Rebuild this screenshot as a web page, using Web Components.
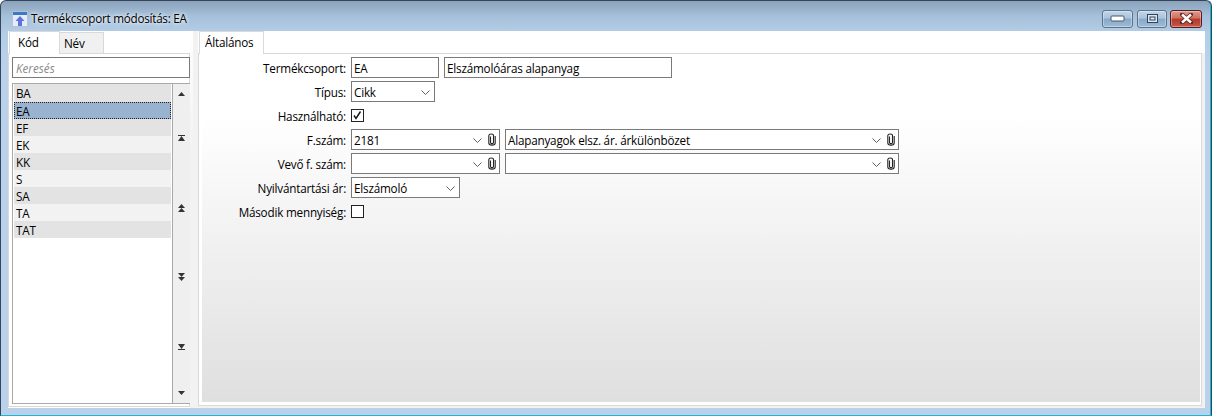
<!doctype html>
<html>
<head>
<meta charset="utf-8">
<style>
html, body { margin: 0; height: 100%; }
body { font: 11.7px "Open Sans", "Noto Sans", sans-serif; letter-spacing: -0.2px; color: #000; width: 1212px; height: 416px; overflow: hidden; }
</style>
</head>
<body>
<x-window title="Termékcsoport módosítás: EA">
  <x-side-panel>
    <x-code-list selected="EA" items="BA,EA,EF,EK,KK,S,SA,TA,TAT"></x-code-list>
  </x-side-panel>
  <x-form-panel tab="Általános">
    <x-row label="Termékcsoport:" top="1"><x-box w="88">EA</x-box><x-box w="228">Elszámolóáras alapanyag</x-box></x-row>
    <x-row label="Típus:" top="3"><x-box w="84" combo>Cikk</x-box></x-row>
    <x-row label="Használható:" top="7" h="13"><x-check checked></x-check></x-row>
    <x-row label="F.szám:" top="7"><x-box w="149" combo clip>2181</x-box><x-box w="394" combo clip>Alapanyagok elsz. ár. árkülönbözet</x-box></x-row>
    <x-row label="Vevő f. szám:" top="3"><x-box w="149" combo clip></x-box><x-box w="394" combo clip></x-box></x-row>
    <x-row label="Nyilvántartási ár:" top="3"><x-box w="109" combo>Elszámoló</x-box></x-row>
    <x-row label="Második mennyiség:" top="7" h="13"><x-check></x-check></x-row>
  </x-form-panel>
</x-window>
<script>
class XWindow extends HTMLElement {
  connectedCallback() {
    const shadow = this.attachShadow({ mode: "open" });
    shadow.innerHTML = `
    <style>
    :host {
      display: grid;
      grid-template-rows: 30px 1fr;
      width: 1212px;
      height: 416px;
      box-sizing: border-box;
      padding: 0 8px 7px;
      border: 1px solid #33465a;
      border-bottom-color: #18b8d0;
      border-radius: 6px 6px 0 0;
      box-shadow: inset -1px 0 0 #18b8d0;
      background: linear-gradient(#8ba2ba 0, #a5c0da 15px, #b4cde6 31px, #b9d1ea 60px);
    }
    header {
      display: flex;
      align-items: center;
      box-sizing: border-box;
      margin: 0 -7px;
      padding: 4px 8px 0 10px;
      height: 30px;
    }
    header svg.app { width: 16px; height: 16px; margin: 1px 3px 0 0; }
    h1 {
      margin: 0;
      flex: 1;
      font: 11.7px "Open Sans", sans-serif;
      letter-spacing: -0.25px;
      text-shadow: 0 0 6px #fff, 0 0 3px #fff;
    }
    .ctl {
      width: 31px;
      height: 18px;
      box-sizing: border-box;
      margin-left: 4px;
      margin-top: 1px;
      border: 1px solid #5b7389;
      border-radius: 3px;
      background: linear-gradient(#c2d5e8 0, #a9c3dc 45%, #86a8c8 50%, #9fbcd8 100%);
      display: flex;
      align-items: center;
      justify-content: center;
      box-shadow: inset 0 0 0 1px rgba(255,255,255,.35);
    }
    .ctl.max { width: 30px; }
    .ctl.close {
      width: 32px;
      margin-left: 3px;
      border-color: #5b1a1a;
      background: linear-gradient(#dd9a90 0, #d0705f 45%, #b23a2a 50%, #c4574a 100%);
    }
    main {
      display: grid;
      grid-template-columns: 182px 1fr;
      column-gap: 8px;
      padding-right: 3px;
      background:
        linear-gradient(#fff, #fff) right top / 3px 22px no-repeat,
        linear-gradient(#fff 0, #f2f2f2 120px) 182px 0 / 3px 100% no-repeat,
        #f2f2f2;
      min-height: 0;
      margin-left: -1px;
      margin-right: -2px;
    }
    </style>
    <header>
      <svg class="app" viewBox="0 0 16 16">
        <rect x=".5" y=".5" width="15" height="15" fill="#e6ebf8" stroke="#b4c2dc"/>
        <rect x="1" y="1" width="14" height="3" fill="#3c78c8"/>
        <path d="M8 5 L12.5 10 L10 10 L10 15 L6 15 L6 10 L3.5 10 Z" fill="#5a74d8"/>
      </svg>
      <h1></h1>
      <div class="ctl"><svg width="15" height="7" viewBox="0 0 15 7"><rect x="1" y="1" width="13" height="5" rx="1" fill="#fff" stroke="#45596e"/></svg></div>
      <div class="ctl max"><svg width="13" height="11" viewBox="0 0 13 11"><rect x="1.5" y="1.5" width="10" height="8" fill="#dfe8f2" stroke="#2f4358"/><rect x="4" y="4" width="5" height="3" fill="none" stroke="#2f4358"/></svg></div>
      <div class="ctl close"><svg width="15" height="11" viewBox="0 0 15 11"><path d="M3 1.5 L12 9.5 M12 1.5 L3 9.5" stroke="#5b2420" stroke-width="4" stroke-linecap="round"/><path d="M3 1.5 L12 9.5 M12 1.5 L3 9.5" stroke="#fff" stroke-width="2.4"/></svg></div>
    </header>
    <main><slot></slot></main>
    `;
    shadow.querySelector("h1").textContent = this.getAttribute("title");
    this.removeAttribute("title");
  }
}

class XSidePanel extends HTMLElement {
  connectedCallback() {
    const shadow = this.attachShadow({ mode: "open" });
    shadow.innerHTML = `
    <style>
    :host { display: flex; flex-direction: column; min-height: 0; background: #fff; padding-bottom: 1px; }
    nav { display: flex; height: 23px; padding-left: 1px; margin-bottom: -1px; }
    nav span { box-sizing: border-box; position: relative; }
    .on {
      width: 51px; height: 23px; padding: 2px 0 0 8px; background: #fff;
      border: 1px solid #d9d9d9; border-bottom: none; z-index: 1;
    }
    .off {
      width: 45px; height: 22px; margin: 1px 0 0 -1px; padding: 2px 0 0 5px; background: #f0f0f0;
      border: 1px solid #d9d9d9; border-left: none;
    }
    section {
      flex: 1; min-height: 0; display: flex; flex-direction: column; gap: 5px;
      border: 1px solid #d9d9d9; padding: 3px 0 2px 3px; background: #fff;
    }
    input {
      box-sizing: border-box; width: 178px; height: 21px; padding: 0 3px; flex: none;
      border: 1px solid #7a7a7a; border-radius: 0; outline: none;
      font: italic 11.7px "Open Sans", sans-serif; background: #fff;
    }
    input::placeholder { color: #8a8a8a; opacity: 1; }
    </style>
    <nav><span class="on">Kód</span><span class="off">Név</span></nav>
    <section>
      <input placeholder="Keresés">
      <slot></slot>
    </section>
    `;
  }
}

class XCodeList extends HTMLElement {
  connectedCallback() {
    const shadow = this.attachShadow({ mode: "open" });
    const items = this.getAttribute("items").split(",");
    const selected = this.getAttribute("selected");
    const code = items.map((name) => `<li class="${name === selected ? "sel" : ""}">${name}</li>`);
    const tri = (down) => down ? "M1 3H8L4.5 7Z" : "M4.5 3L8 7H1Z";
    const icon = (d) => `<svg width="9" height="10" viewBox="0 0 9 10"><path d="${d}" fill="#333"/></svg>`;
    shadow.innerHTML = `
    <style>
    :host {
      display: grid; grid-template-columns: 1fr 17px; flex: 1; min-height: 0; width: 178px;
      box-sizing: border-box; border: 1px solid #a9a9a9; border-right: none; background: #fff;
    }
    ul { list-style: none; margin: 0; padding: 0 1px; border-right: 1px solid #a9a9a9; }
    li { height: 17px; line-height: 18px; padding-left: 2px; background: #f2f2f2; box-sizing: border-box; }
    li:nth-child(odd) { background: #e3e3e3; }
    li:first-child { height: 18px; }
    li.sel { background: #98b2cf; outline: 1px dotted #222; outline-offset: -1px; }
    aside { background: #efefef; display: flex; flex-direction: column; }
    .end { height: 20px; display: flex; align-items: center; justify-content: center; flex: none; }
    .mid { flex: 1; display: flex; flex-direction: column; justify-content: space-around; align-items: center; }
    svg { display: block; }
    </style>
    <ul>${code.join("")}</ul>
    <aside>
      <div class="end">${icon(tri(false))}</div>
      <div class="mid">
        ${icon("M1 1H8V2H1ZM4.5 2L8 7H1Z")}
        ${icon("M4.5 0L8 4H1ZM4.5 4L8 8H1Z")}
        ${icon("M1 0H8L4.5 4ZM1 4H8L4.5 8Z")}
        ${icon("M1 1H8L4.5 6ZM1 6H8V7H1Z")}
      </div>
      <div class="end">${icon(tri(true))}</div>
    </aside>
    `;
  }
}

class XFormPanel extends HTMLElement {
  connectedCallback() {
    const shadow = this.attachShadow({ mode: "open" });
    shadow.innerHTML = `
    <style>
    :host { display: flex; flex-direction: column; min-height: 0; padding-bottom: 2px; }
    nav { display: flex; height: 23px; margin-bottom: -1px; padding-left: 1px; background: #fff; }
    nav span {
      box-sizing: border-box; width: 65px; height: 23px; padding: 2px 0 0 5px; background: #fff;
      border: 1px solid #d9d9d9; border-bottom: none; z-index: 1;
    }
    section {
      flex: 1; min-height: 0; border: 1px solid #d9d9d9; padding: 2px 1px 3px 3px; background: #fff;
    }
    .body {
      height: 100%; box-sizing: border-box; padding: 0; overflow: hidden;
      background: linear-gradient(#fff 0, #fff 60px, #dfdfdf 100%);
    }
    </style>
    <nav><span></span></nav>
    <section><div class="body"><slot></slot></div></section>
    `;
    shadow.querySelector("nav span").textContent = this.getAttribute("tab");
  }
}

class XRow extends HTMLElement {
  connectedCallback() {
    const shadow = this.attachShadow({ mode: "open" });
    const h = this.getAttribute("h") || 21;
    shadow.innerHTML = `
    <style>
    :host { display: flex; align-items: center; height: ${h}px; margin-top: ${this.getAttribute("top")}px; }
    label { width: 144px; text-align: right; flex: none; margin-right: 5px; white-space: nowrap; }
    div { display: flex; gap: 5px; align-items: center; }
    </style>
    <label></label><div><slot></slot></div>
    `;
    shadow.querySelector("label").textContent = this.getAttribute("label");
  }
}

class XBox extends HTMLElement {
  connectedCallback() {
    const shadow = this.attachShadow({ mode: "open" });
    const chevron = this.hasAttribute("combo")
      ? `<svg class="chev" width="9" height="5" viewBox="0 0 9 5"><path d="M.5 .5L4.5 4.5L8.5 .5" fill="none" stroke="#606060"/></svg>` : "";
    const clip = this.hasAttribute("clip")
      ? `<svg class="clip" width="8" height="13" viewBox="0 0 8 13"><path d="M2.5 3.5V9.5C2.5 11 5.5 11 5.5 9.5V2.5C5.5 .5 1 .5 .8 2.5V10C.8 12.8 7.2 12.8 7.2 10V3" fill="none" stroke="#222" stroke-width="1.1"/></svg>` : "";
    shadow.innerHTML = `
    <style>
    :host {
      display: flex; align-items: center; box-sizing: border-box; height: 21px;
      width: ${this.getAttribute("w")}px; padding: 0 3px 0 2px;
      border: 1px solid #7a7a7a; background: #fff;
    }
    span { flex: 1; white-space: nowrap; }
    .chev { margin: 1px 6px 0 0; }
    .clip { margin-right: 0; }
    :host(:not([clip])) .chev { margin-right: 1px; }
    </style>
    <span><slot></slot></span>${chevron}${clip}
    `;
  }
}

class XCheck extends HTMLElement {
  connectedCallback() {
    const shadow = this.attachShadow({ mode: "open" });
    shadow.innerHTML = `
    <style>
    :host { display: block; box-sizing: border-box; width: 13px; height: 13px; border: 1px solid #222; background: #fff; }
    svg { display: block; }
    </style>
    ${this.hasAttribute("checked") ? `<svg width="11" height="11" viewBox="0 0 11 11"><path d="M2 5.5L4 8.5L8.5 1.5" fill="none" stroke="#111" stroke-width="1.4"/></svg>` : ""}
    `;
  }
}

customElements.define("x-window", XWindow);
customElements.define("x-side-panel", XSidePanel);
customElements.define("x-code-list", XCodeList);
customElements.define("x-form-panel", XFormPanel);
customElements.define("x-row", XRow);
customElements.define("x-box", XBox);
customElements.define("x-check", XCheck);
</script>
</body>
</html>
